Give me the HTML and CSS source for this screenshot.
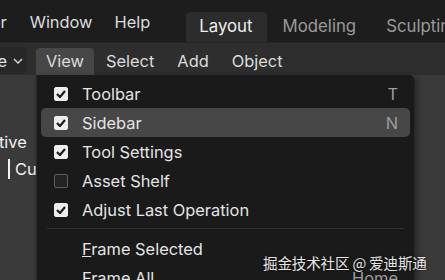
FILE: index.html
```html
<!DOCTYPE html>
<html>
<head lang="en">
    <meta charset="UTF-8">
    <title>View menu</title>
    <link rel="stylesheet" href="styles.css">
</head>
<body>
    <div class="topbar">
        <span class="top-item clipped">er</span>
        <span class="top-item">Window</span>
        <span class="top-item">Help</span>
        <div class="tabs">
            <span class="tab active">Layout</span>
            <span class="tab">Modeling</span>
            <span class="tab">Sculpting</span>
        </div>
    </div>
    <div class="header">
        <div class="mode">
            <span>e</span>
            <svg width="10" height="6" viewBox="0 0 10 6"><path d="M1 1 L5 5 L9 1" fill="none" stroke="#cfcfcf" stroke-width="1.5"/></svg>
        </div>
        <span class="hmenu open">View</span>
        <span class="hmenu">Select</span>
        <span class="hmenu">Add</span>
        <span class="hmenu">Object</span>
    </div>
    <div class="viewport">
        <div class="overlay-text">
            <div class="line1">tive</div>
            <div class="line2"><span class="bar"></span>Cu</div>
        </div>
    </div>

    <div class="menu">
        <div class="row">
            <span class="check on"><svg width="10" height="8" viewBox="0 0 10 8"><path d="M1 4 L4 7 L9 1" fill="none" stroke="#1c1c1c" stroke-width="2.2"/></svg></span>
            <span class="label">Toolbar</span>
            <span class="key">T</span>
        </div>
        <div class="row hover">
            <span class="check on"><svg width="10" height="8" viewBox="0 0 10 8"><path d="M1 4 L4 7 L9 1" fill="none" stroke="#1c1c1c" stroke-width="2.2"/></svg></span>
            <span class="label">Sidebar</span>
            <span class="key">N</span>
        </div>
        <div class="row">
            <span class="check on"><svg width="10" height="8" viewBox="0 0 10 8"><path d="M1 4 L4 7 L9 1" fill="none" stroke="#1c1c1c" stroke-width="2.2"/></svg></span>
            <span class="label">Tool Settings</span>
        </div>
        <div class="row">
            <span class="check"></span>
            <span class="label">Asset Shelf</span>
        </div>
        <div class="row">
            <span class="check on"><svg width="10" height="8" viewBox="0 0 10 8"><path d="M1 4 L4 7 L9 1" fill="none" stroke="#1c1c1c" stroke-width="2.2"/></svg></span>
            <span class="label">Adjust Last Operation</span>
        </div>
        <div class="sep"></div>
        <div class="row">
            <span class="nocheck"></span>
            <span class="label"><u>F</u>rame Selected</span>
        </div>
        <div class="row">
            <span class="nocheck"></span>
            <span class="label">Frame All</span>
            <span class="key">Home</span>
        </div>
    </div>

    <div class="watermark">掘金技术社区 @ 爱迪斯通</div>
</body>
</html>
```

FILE: styles.css
```css
*{
    margin: 0;
    padding: 0;
    box-sizing: border-box;
}
body{
    width: 445px;
    height: 280px;
    overflow: hidden;
    position: relative;
    background: #3a3a3a;
    font-family: Inter, "Noto Sans", sans-serif;
    font-size: 16.4px;
    color: #e2e2e2;
}
.topbar{
    height: 42px;
    background: #1d1d1d;
    display: flex;
    align-items: flex-start;
    white-space: nowrap;
}
.top-item{
    margin-top: 12px;
    margin-right: 22px;
    color: #dcdcdc;
}
.clipped{
    margin-left: -9px;
    margin-right: 23px;
}
.tabs{
    display: flex;
    margin-left: 14px;
    margin-top: 12px;
}
.tab{
    height: 30px;
    line-height: 29px;
    padding: 0 14px 0 14px;
    color: #9a9a9a;
    font-size: 16.8px;
    margin-right: 2px;
}
.tab.active{
    background: #2c2c2c;
    color: #eeeeee;
    border-radius: 4px 4px 0 0;
    padding: 0 14px 0 13px;
}
.header{
    height: 33px;
    background: #2e2e2e;
    border-top: 1px solid #262626;
    display: flex;
    align-items: flex-end;
    white-space: nowrap;
}
.mode{
    width: 27px;
    height: 27px;
    margin-right: 9px;
    background: #272727;
    border-radius: 0 5px 5px 0;
    display: flex;
    align-items: center;
    justify-content: flex-end;
    gap: 6px;
    padding-right: 4px;
    position: relative;
    top: -1px;
}
.mode span{
    margin-left: -6px;
}
.hmenu{
    height: 27px;
    line-height: 26px;
    padding: 0 11px;
    margin-right: 1px;
    color: #dcdcdc;
}
.hmenu.open{
    background: #474747;
    border-radius: 4px 4px 0 0;
    width: 58px;
    padding: 0 10px;
    margin-right: 1px;
}
.viewport{
    height: 205px;
    background: #3a3a3a;
}
.overlay-text{
    color: #f2f2f2;
    padding-top: 57px;
}
.line1{
    height: 27px;
    margin-left: -1px;
}
.line2{
    display: flex;
    align-items: center;
    gap: 5px;
}
.bar{
    display: inline-block;
    width: 2px;
    height: 20px;
    background: #f2f2f2;
    margin-left: 8px;
}
.menu{
    position: absolute;
    left: 36px;
    top: 75px;
    width: 379px;
    height: 215px;
    background: #1a1a1a;
    border: 1px solid #262626;
    border-top: none;
    border-radius: 0 6px 6px 6px;
    padding: 4px 4px 0 4px;
    box-shadow: 2px 2px 6px rgba(0, 0, 0, 0.35);
}
.row{
    height: 29px;
    display: flex;
    align-items: center;
    padding: 0 14px 0 13px;
    border-radius: 5px;
    white-space: nowrap;
}
.row.hover{
    background: #474747;
}
.check{
    width: 14px;
    height: 14px;
    margin-right: 14px;
    border: 1px solid #5e5e5e;
    border-radius: 2px;
    background: #232323;
    display: flex;
    align-items: center;
    justify-content: center;
}
.check.on{
    background: #ededed;
    border-color: #ededed;
}
.nocheck{
    width: 14px;
    margin-right: 14px;
}
.label{
    flex: 1;
    color: #e4e4e4;
}
.key{
    color: #9c9c9c;
    margin-right: -2px;
}
.sep{
    height: 1px;
    background: #2f2f2f;
    margin: 4px 6px 5px 6px;
}
.watermark{
    position: absolute;
    left: 263px;
    top: 252px;
    font-family: "Noto Sans CJK SC", sans-serif;
    font-size: 14.6px;
    letter-spacing: -0.2px;
    color: #e6e6e6;
    text-shadow: 0 0 3px rgba(0, 0, 0, 0.6);
    white-space: nowrap;
}
```
